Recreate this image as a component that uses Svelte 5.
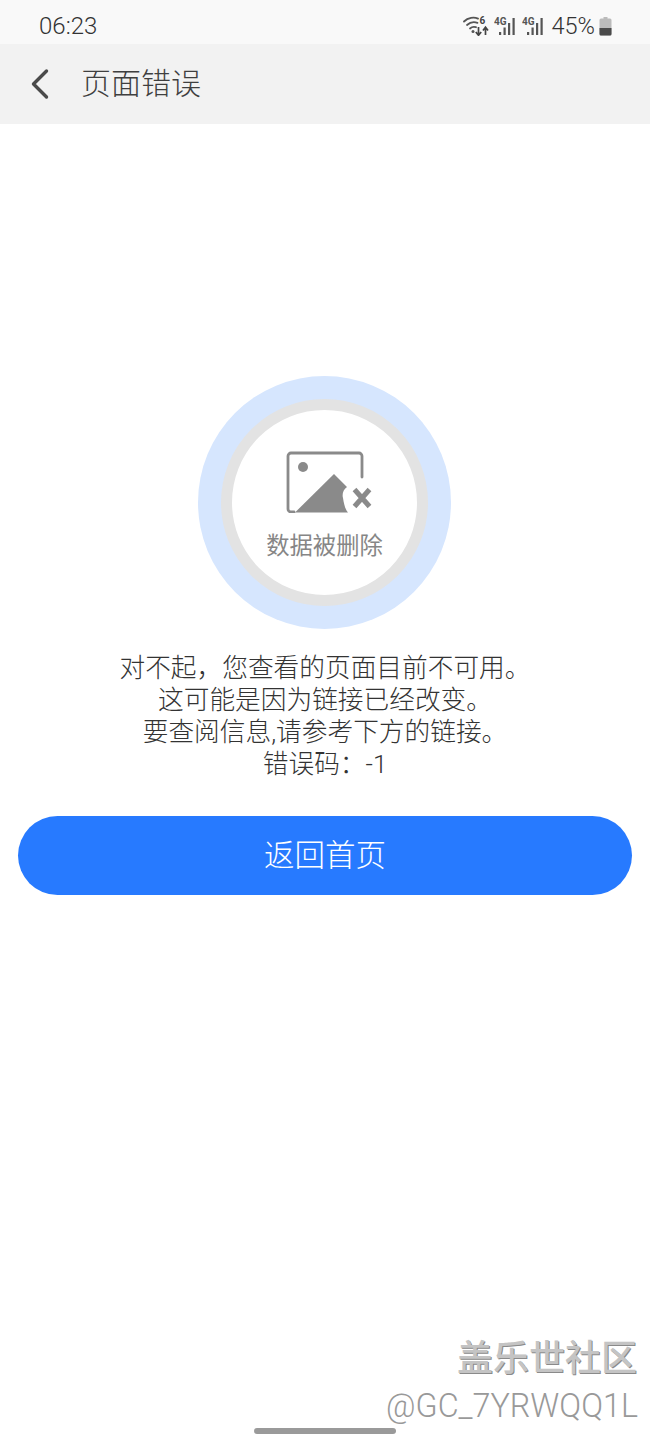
<script lang="ts">
  // Static error page from a mobile webview
  const messages = [
    '对不起，您查看的页面目前不可用。',
    '这可能是因为链接已经改变。',
    '要查阅信息,请参考下方的链接。',
    '错误码：-1',
  ];
</script>

<div class="page">
  <div class="status-bar">
    <span class="time">06:23</span>
    <div class="status-icons">
      <svg class="wifi" width="26" height="20" viewBox="0 0 26 20" fill="none">
        <g stroke="#555" stroke-width="1.800" stroke-linecap="round">
          <path d="M1 5.500 C5 1.500 11 0.800 15 2.600" />
          <path d="M4 9 C7 6.200 11 5.600 14.500 6.800" />
          <path d="M7 12.500 C8.800 10.800 11 10.500 13 11.200" />
        </g>
        <circle cx="10" cy="15.500" r="1.500" fill="#555" />
        <text x="16.500" y="8" class="wifi-six">6</text>
        <path d="M15.500 11 V19 M12.800 16 L15.500 19.300 L18.200 16" stroke="#444" stroke-width="1.700" fill="none" />
        <path d="M22.500 19 V11.500 M20 14.500 L22.500 11.200 L25 14.500" stroke="#444" stroke-width="1.700" fill="none" />
      </svg>
      {#each [0, 1] as sim}
        <svg class="signal" width="23" height="19" viewBox="0 0 23 19" data-sim={sim}>
          <text x="0" y="8" class="net">4G</text>
          <rect x="5" y="15" width="2.200" height="3" fill="#555" />
          <rect x="9.500" y="10.500" width="2.200" height="7.500" fill="#555" />
          <rect x="14" y="6" width="2.200" height="12" fill="#555" />
          <rect x="18.500" y="1" width="2.200" height="17" fill="#555" />
        </svg>
      {/each}
      <span class="battery-text">45%</span>
      <svg class="battery" width="13" height="19" viewBox="0 0 13 19">
        <rect x="4.500" y="0" width="4" height="2" fill="#bbb" />
        <rect x="0.500" y="1.500" width="12" height="17" rx="1.500" fill="#bbb" />
        <path d="M0.500 11 H12.500 V17 a1.500 1.500 0 0 1 -1.500 1.500 H2 a1.500 1.500 0 0 1 -1.500 -1.500 Z" fill="#4a4a4a" />
      </svg>
    </div>
  </div>

  <header class="nav">
    <svg class="back" width="20" height="32" viewBox="0 0 20 32" fill="none">
      <path d="M16.500 3 L3.500 16 L16.500 29" stroke="#4a4a4a" stroke-width="3.400" stroke-linecap="round" stroke-linejoin="round" />
    </svg>
    <h1>页面错误</h1>
  </header>

  <main class="content">
    <div class="ring-outer">
      <div class="ring-inner">
        <svg class="deleted-icon" width="88" height="62" viewBox="0 0 88 62" fill="none">
          <path d="M76 26 V5 a3 3 0 0 0 -3 -3 H5 a3 3 0 0 0 -3 3 V58 a3 3 0 0 0 3 3 H8" stroke="#8a8a8a" stroke-width="2.800" stroke-linecap="round" />
          <circle cx="17" cy="16" r="5" fill="#8a8a8a" />
          <path d="M9 61.500 L48 23 L61 36 C57 39 56 43 57 47 C58 53 59 58 62 61.500 Z" fill="#8a8a8a" />
          <path d="M68.500 38.500 L83.500 55.500 M83.500 38.500 L68.500 55.500" stroke="#8a8a8a" stroke-width="5" />
        </svg>
        <span class="deleted-label">数据被删除</span>
      </div>
    </div>

    <div class="message">
      {#each messages as line}
        <p>{line}</p>
      {/each}
    </div>

    <button class="home-btn"><span>返回首页</span></button>
  </main>

  <div class="watermark">
    <div class="wm-title">盖乐世社区</div>
    <div class="wm-user">@GC_7YRWQQ1L</div>
  </div>
  <div class="home-indicator"></div>
</div>

<style>
  :global(body) {
    margin: 0;
    background: #fff;
  }

  .page {
    position: relative;
    width: 650px;
    height: 1444px;
    overflow: hidden;
    background: #fff;
    font-family: "Roboto", "Noto Sans CJK SC", sans-serif;
  }

  .status-bar {
    height: 44px;
    box-sizing: border-box;
    padding: 8px 38px 0 39px;
    display: flex;
    align-items: center;
    justify-content: space-between;
    background: #f9f9f9;
  }

  .time {
    font-size: 24px;
    font-weight: 300;
    color: #333;
  }

  .status-icons {
    display: flex;
    align-items: center;
    gap: 5px;
  }

  .wifi-six {
    font: bold 10px "Roboto", sans-serif;
    fill: #444;
  }

  .net {
    font: bold 10px "Roboto", sans-serif;
    fill: #555;
  }

  .battery-text {
    font-size: 23.500px;
    font-weight: 300;
    color: #333;
    margin: 0 -1px 0 2px;
  }

  .nav {
    height: 80px;
    box-sizing: border-box;
    padding-left: 30px;
    display: flex;
    align-items: center;
    background: #f2f2f2;
  }

  .nav h1 {
    margin: 0 0 0 31px;
    padding-bottom: 6px;
    font-size: 30px;
    font-weight: 300;
    color: #3f3f3f;
  }

  .content {
    display: flex;
    flex-direction: column;
    align-items: center;
    padding: 252px 18px 0;
  }

  .ring-outer {
    width: 253px;
    height: 253px;
    box-sizing: border-box;
    padding: 23px;
    margin-right: 1px;
    border-radius: 50%;
    background: #d6e6fe;
  }

  .ring-inner {
    width: 100%;
    height: 100%;
    box-sizing: border-box;
    border: 11px solid #e3e3e3;
    border-radius: 50%;
    background: #fff;
    display: flex;
    flex-direction: column;
    align-items: center;
    padding-top: 41px;
  }

  .deleted-icon {
    margin-left: 11px;
  }

  .deleted-label {
    margin-top: 17px;
    font-size: 23.300px;
    line-height: 32px;
    color: #868686;
  }

  .message {
    margin-top: 23px;
    text-align: center;
    font-size: 25.700px;
    font-weight: 300;
    line-height: 32px;
    color: #333;
  }

  .message p {
    margin: 0;
  }

  .home-btn {
    margin-top: 36px;
    width: 100%;
    height: 79px;
    padding: 0 0 6px;
    border: none;
    border-radius: 40px;
    background: #277aff;
    color: #fff;
    font-family: inherit;
    font-size: 30.500px;
    font-weight: 300;
  }

  .watermark {
    position: absolute;
    right: 12px;
    top: 1337px;
    text-align: right;
  }

  .wm-title {
    font-size: 36px;
    line-height: 44px;
    font-weight: 500;
    color: #c4c4c4;
    text-shadow: 1px 1px 0 #8a8a8a;
    margin-right: 1px;
  }

  .wm-user {
    font-size: 32.300px;
    font-weight: 300;
    line-height: 40px;
    margin-top: 5px;
    color: #999;
  }

  .home-indicator {
    position: absolute;
    left: 254px;
    top: 1428px;
    width: 142px;
    height: 6px;
    border-radius: 3px;
    background: #9a9a9a;
  }
</style>
